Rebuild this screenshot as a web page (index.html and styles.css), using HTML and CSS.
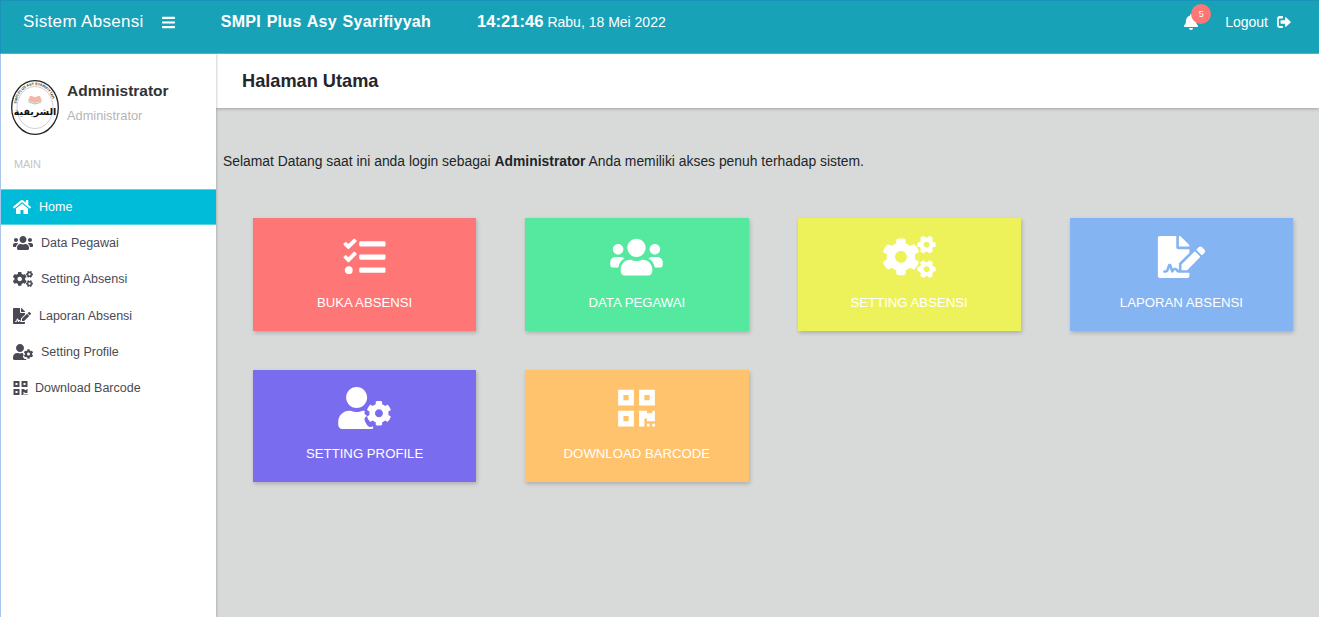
FILE: index.html
```html
<!DOCTYPE html>
<html lang="id">
<head>
  <meta charset="UTF-8">
  <title>Sistem Absensi</title>
  <link rel="stylesheet" href="styles.css">
</head>
<body>
  <svg class="icon-defs" xmlns="http://www.w3.org/2000/svg">
    <symbol id="i-bars" viewBox="0 0 448 512"><path d="M16 132h416c8.837 0 16-7.163 16-16V76c0-8.837-7.163-16-16-16H16C7.163 60 0 67.163 0 76v40c0 8.837 7.163 16 16 16zm0 160h416c8.837 0 16-7.163 16-16v-40c0-8.837-7.163-16-16-16H16c-8.837 0-16 7.163-16 16v40c0 8.837 7.163 16 16 16zm0 160h416c8.837 0 16-7.163 16-16v-40c0-8.837-7.163-16-16-16H16c-8.837 0-16 7.163-16 16v40c0 8.837 7.163 16 16 16z"/></symbol>
    <symbol id="i-bell" viewBox="0 0 448 512"><path d="M224 512c35.32 0 63.97-28.65 63.97-64H160.03c0 35.35 28.65 64 63.97 64zm215.39-149.71c-19.32-20.76-55.47-51.99-55.47-154.29 0-77.7-54.48-139.9-127.94-155.16V32c0-17.67-14.32-32-31.98-32s-31.98 14.33-31.98 32v20.84C118.56 68.1 64.08 130.3 64.08 208c0 102.3-36.15 133.53-55.47 154.29-6 6.45-8.66 14.16-8.61 21.71.11 16.4 12.98 32 32.1 32h383.8c19.12 0 32-15.6 32.1-32 .05-7.55-2.61-15.27-8.61-21.71z"/></symbol>
    <symbol id="i-logout" viewBox="0 0 512 448"><path d="M200 0H90C40 0 0 40 0 90v268c0 50 40 90 90 90h110c8 0 14-6 14-14v-44c0-8-6-14-14-14H90c-16 0-30-14-30-30V122c0-16 14-30 30-30h110c8 0 14-6 14-14V14c0-8-6-14-14-14z"/><path d="M505 210L330 50c-15-13-38-3-38 17v93H150c-13 0-24 11-24 24v80c0 13 11 24 24 24h142v93c0 20 23 30 38 17l175-160c9-8 9-20 0-28z"/></symbol>
    <symbol id="i-home" viewBox="0 0 576 512"><path d="M280.37 148.26L96 300.11V464a16 16 0 0 0 16 16l112.06-.29a16 16 0 0 0 15.92-16V368a16 16 0 0 1 16-16h64a16 16 0 0 1 16 16v95.64a16 16 0 0 0 16 16.05L464 480a16 16 0 0 0 16-16V300L295.67 148.26a12.19 12.19 0 0 0-15.3 0zM571.6 251.47L488 182.56V44.05a12 12 0 0 0-12-12h-56a12 12 0 0 0-12 12v72.61L318.47 43a48 48 0 0 0-61 0L4.34 251.47a12 12 0 0 0-1.6 16.9l25.5 31A12 12 0 0 0 45.15 301l235.22-193.74a12.19 12.19 0 0 1 15.3 0L530.9 301a12 12 0 0 0 16.9-1.6l25.5-31a12 12 0 0 0-1.7-16.93z"/></symbol>
    <symbol id="i-users" viewBox="0 0 640 512"><path d="M96 224c35.3 0 64-28.7 64-64s-28.7-64-64-64-64 28.7-64 64 28.7 64 64 64zm448 0c35.3 0 64-28.7 64-64s-28.7-64-64-64-64 28.7-64 64 28.7 64 64 64zm32 32h-64c-17.6 0-33.5 7.1-45.1 18.6 40.3 22.1 68.9 62 75.1 109.4h66c17.7 0 32-14.3 32-32v-32c0-35.3-28.7-64-64-64zm-256 0c61.9 0 112-50.1 112-112S381.9 32 320 32 208 82.1 208 144s50.1 112 112 112zm76.8 32h-8.3c-20.8 10-43.9 16-68.5 16s-47.6-6-68.5-16h-8.3C179.6 288 128 339.6 128 403.2V432c0 26.5 21.5 48 48 48h288c26.5 0 48-21.5 48-48v-28.8c0-63.6-51.6-115.2-115.2-115.2zm-223.7-13.4C161.5 263.1 145.6 256 128 256H64c-35.3 0-64 28.7-64 64v32c0 17.7 14.3 32 32 32h65.9c6.3-47.4 34.9-87.3 75.2-109.4z"/></symbol>
    <symbol id="i-tasks" viewBox="0 0 512 512"><path d="M139.61 35.5a12 12 0 0 0-17 0L58.93 98.81l-22.7-22.12a12 12 0 0 0-17 0L3.53 92.41a12 12 0 0 0 0 17l47.59 47.4a12.78 12.78 0 0 0 17.61 0l15.59-15.62L156.52 69a12.09 12.09 0 0 0 .09-17zm0 159.19a12 12 0 0 0-17 0l-63.68 63.72-22.7-22.1a12 12 0 0 0-17 0L3.53 252a12 12 0 0 0 0 17L51 316.5a12.77 12.77 0 0 0 17.6 0l15.7-15.69 72.2-72.22a12 12 0 0 0 .09-16.9zM64 368c-26.49 0-48.59 21.5-48.59 48S37.53 464 64 464a48 48 0 0 0 0-96zm432 16H208a16 16 0 0 0-16 16v32a16 16 0 0 0 16 16h288a16 16 0 0 0 16-16v-32a16 16 0 0 0-16-16zm0-320H208a16 16 0 0 0-16 16v32a16 16 0 0 0 16 16h288a16 16 0 0 0 16-16V80a16 16 0 0 0-16-16zm0 160H208a16 16 0 0 0-16 16v32a16 16 0 0 0 16 16h288a16 16 0 0 0 16-16v-32a16 16 0 0 0-16-16z"/></symbol>
    <symbol id="i-cogs" viewBox="0 0 640 512"><path d="M512.1 191l-8.2 14.3c-3 5.3-9.4 7.5-15.1 5.4-11.8-4.4-22.6-10.7-32.1-18.6-4.6-3.8-5.8-10.5-2.8-15.7l8.2-14.3c-6.9-8-12.3-17.3-15.9-27.4h-16.5c-6 0-11.2-4.3-12.2-10.3-2-12-2.1-24.6 0-37.1 1-6 6.2-10.4 12.2-10.4h16.5c3.6-10.1 9-19.4 15.9-27.4l-8.2-14.3c-3-5.2-1.9-11.9 2.8-15.7 9.5-7.9 20.4-14.2 32.1-18.6 5.7-2.1 12.1.1 15.1 5.4l8.2 14.3c10.5-1.9 21.2-1.9 31.7 0L552 6.3c3-5.3 9.4-7.5 15.1-5.4 11.8 4.4 22.6 10.7 32.1 18.6 4.6 3.8 5.8 10.5 2.8 15.7l-8.2 14.3c6.9 8 12.3 17.3 15.9 27.4h16.5c6 0 11.2 4.3 12.2 10.3 2 12 2.1 24.6 0 37.1-1 6-6.2 10.4-12.2 10.4h-16.5c-3.6 10.1-9 19.4-15.9 27.4l8.2 14.3c3 5.2 1.9 11.9-2.8 15.7-9.5 7.9-20.4 14.2-32.1 18.6-5.7 2.1-12.1-.1-15.1-5.4l-8.2-14.3c-10.4 1.9-21.2 1.9-31.7 0zm-10.5-58.8c38.5 29.6 82.4-14.3 52.8-52.8-38.5-29.7-82.4 14.3-52.8 52.8zM386.3 286.1l33.7 16.8c10.1 5.8 14.5 18.1 10.5 29.1-8.9 24.2-26.4 46.4-42.6 65.8-7.4 8.9-20.2 11.1-30.3 5.3l-29.1-16.8c-16 13.7-34.6 24.6-54.9 31.7v33.6c0 11.6-8.3 21.6-19.7 23.6-24.6 4.2-50.4 4.4-75.9 0-11.5-2-20-11.9-20-23.6V418c-20.3-7.2-38.9-18-54.9-31.7L74 403c-10 5.8-22.9 3.6-30.3-5.3-16.2-19.4-33.3-41.6-42.2-65.7-4-10.9.4-23.2 10.5-29.1l33.3-16.8c-3.9-20.9-3.9-42.4 0-63.4L12 205.8c-10.1-5.8-14.6-18.1-10.5-29 8.9-24.2 26-46.4 42.2-65.8 7.4-8.9 20.2-11.1 30.3-5.3l29.1 16.8c16-13.7 34.6-24.6 54.9-31.7V57.1c0-11.5 8.2-21.5 19.6-23.5 24.6-4.2 50.5-4.4 76-.1 11.5 2 20 11.9 20 23.6v33.6c20.3 7.2 38.9 18 54.9 31.7l29.1-16.8c10-5.8 22.9-3.6 30.3 5.3 16.2 19.4 33.2 41.6 42.1 65.8 4 10.9.1 23.2-10 29.1l-33.7 16.8c3.9 21 3.9 42.5 0 63.5zm-117.6 21.1c59.2-77-28.7-164.9-105.7-105.7-59.2 77 28.7 164.9 105.7 105.7zm243.4 182.7l-8.2 14.3c-3 5.3-9.4 7.5-15.1 5.4-11.8-4.4-22.6-10.7-32.1-18.6-4.6-3.8-5.8-10.5-2.8-15.7l8.2-14.3c-6.9-8-12.3-17.3-15.9-27.4h-16.5c-6 0-11.2-4.3-12.2-10.3-2-12-2.1-24.6 0-37.1 1-6 6.2-10.4 12.2-10.4h16.5c3.6-10.1 9-19.4 15.9-27.4l-8.2-14.3c-3-5.2-1.9-11.9 2.8-15.7 9.5-7.9 20.4-14.2 32.1-18.6 5.7-2.1 12.1.1 15.1 5.4l8.2 14.3c10.5-1.9 21.2-1.9 31.7 0l8.2-14.3c3-5.3 9.4-7.5 15.1-5.4 11.8 4.4 22.6 10.7 32.1 18.6 4.6 3.8 5.8 10.5 2.8 15.7l-8.2 14.3c6.9 8 12.3 17.3 15.9 27.4h16.5c6 0 11.2 4.3 12.2 10.3 2 12 2.1 24.6 0 37.1-1 6-6.2 10.4-12.2 10.4h-16.5c-3.6 10.1-9 19.4-15.9 27.4l8.2 14.3c3 5.2 1.9 11.9-2.8 15.7-9.5 7.9-20.4 14.2-32.1 18.6-5.7 2.1-12.1-.1-15.1-5.4l-8.2-14.3c-10.4 1.9-21.2 1.9-31.7 0zM501.6 431c38.5 29.6 82.4-14.3 52.8-52.8-38.5-29.6-82.4 14.3-52.8 52.8z"/></symbol>
    <symbol id="i-file" viewBox="0 0 576 512"><path d="M218.17 424.14c-2.95-5.92-8.09-6.52-10.17-6.52s-7.22.59-10.02 6.19l-7.67 15.34c-6.37 12.78-25.03 11.37-29.48-2.09L144 386.59l-10.61 31.88c-5.89 17.66-22.38 29.53-41 29.53H80c-8.84 0-16-7.16-16-16s7.16-16 16-16h12.39c4.83 0 9.11-3.08 10.64-7.66l18.19-54.64c3.3-9.81 12.44-16.41 22.78-16.41s19.48 6.59 22.77 16.41l13.88 41.64c19.75-16.19 54.06-9.7 66 14.16 1.89 3.78 5.49 5.95 9.36 6.26v-82.12l128-127.09V160H248c-13.2 0-24-10.8-24-24V0H24C10.7 0 0 10.7 0 24v464c0 13.3 10.7 24 24 24h336c13.3 0 24-10.7 24-24v-40l-128-.11c-16.12-.31-30.58-9.28-37.83-23.75zM384 121.9c0-6.3-2.5-12.4-7-16.9L279.1 7c-4.5-4.5-10.6-7-17-7H256v128h128v-6.1zm-96 225.06V416h68.99l161.68-162.78-67.88-67.88L288 346.96zm280.54-179.63l-31.87-31.87c-9.94-9.94-26.07-9.94-36.01 0l-27.25 27.25c-2.94 2.94-2.94 7.7 0 10.64l57.24 57.24c2.94 2.94 7.7 2.94 10.64 0l27.25-27.25c9.95-9.93 9.95-26.07 0-36.01z"/></symbol>
    <symbol id="i-usercog" viewBox="0 0 640 512"><path d="M610.5 341.3c2.6-14.1 2.6-28.5 0-42.6l25.8-14.9c3-1.7 4.3-5.2 3.3-8.5-6.7-21.5-18.2-41-33.2-57.1-2.3-2.5-6-3.1-9-1.4l-25.8 14.9c-10.9-9.3-23.4-16.5-36.9-21.3v-29.8c0-3.4-2.4-6.4-5.7-7.1-22.3-5-45-4.8-66.2 0-3.3.7-5.7 3.7-5.7 7.1v29.8c-13.5 4.8-26 12-36.9 21.3l-25.8-14.9c-2.9-1.7-6.7-1.1-9 1.4-15 16.1-26.5 35.6-33.2 57.1-1 3.3.4 6.8 3.3 8.5l25.8 14.9c-2.6 14.1-2.6 28.5 0 42.6l-25.8 14.9c-3 1.7-4.3 5.2-3.3 8.5 6.7 21.5 18.2 41 33.2 57.1 2.3 2.5 6 3.1 9 1.4l25.8-14.9c10.9 9.3 23.4 16.5 36.9 21.3v29.8c0 3.4 2.4 6.4 5.7 7.1 22.3 5 45 4.8 66.2 0 3.3-.7 5.7-3.7 5.7-7.1v-29.8c13.5-4.8 26-12 36.9-21.3l25.8 14.9c2.9 1.7 6.7 1.1 9-1.4 15-16.1 26.5-35.6 33.2-57.1 1-3.3-.4-6.8-3.3-8.5l-25.8-14.9zM496 368.5c-26.8 0-48.5-21.8-48.5-48.5s21.8-48.5 48.5-48.5 48.5 21.8 48.5 48.5-21.7 48.5-48.5 48.5zM224 256c70.7 0 128-57.3 128-128S294.7 0 224 0 96 57.3 96 128s57.3 128 128 128zm201.2 226.5c-2.3-1.2-4.6-2.6-6.8-3.9l-7.9 4.6c-6 3.4-12.8 5.3-19.6 5.3-10.9 0-21.4-4.6-28.9-12.6-18.3-19.8-32.3-43.9-40.2-69.6-5.5-17.7 1.9-36.4 17.9-45.7l7.9-4.6c-.1-2.6-.1-5.2 0-7.8l-7.9-4.6c-16-9.2-23.4-28-17.9-45.7.9-2.9 2.2-5.8 3.2-8.7-3.8-.3-7.5-1.2-11.4-1.2h-16.7c-22.2 10.2-46.9 16-72.9 16s-50.6-5.8-72.9-16h-16.7C60.2 288 0 348.2 0 422.4V464c0 26.5 21.5 48 48 48h352c10.1 0 19.5-3.2 27.2-8.5-1.2-3.8-2-7.7-2-11.8v-9.2z"/></symbol>
    <symbol id="i-qr" viewBox="0 0 448 512"><path d="M0 224h192V32H0v192zM64 96h64v64H64V96zm192-64v192h192V32H256zm128 128h-64V96h64v64zM0 480h192V288H0v192zm64-128h64v64H64v-64zm352-64h32v128h-96v-32h-32v96h-64V288h96v32h64v-32zm0 160h32v32h-32v-32zm-64 0h32v32h-32v-32z"/></symbol>
  </svg>

  <header class="topbar">
    <div class="brand">Sistem Absensi</div>
    <svg class="toggle"><use href="#i-bars"/></svg>
    <div class="school">SMPI Plus Asy Syarifiyyah</div>
    <div class="clock"><b>14:21:46</b> Rabu, 18 Mei 2022</div>
    <div class="top-right">
      <div class="bell">
        <svg class="bell-icon"><use href="#i-bell"/></svg>
        <span class="badge">5</span>
      </div>
      <a class="logout">Logout <svg class="logout-icon"><use href="#i-logout"/></svg></a>
    </div>
  </header>

  <div class="wrap">
    <aside class="sidebar">
      <div class="profile">
        <svg class="logo" viewBox="0 0 48 55">
          <defs><path id="logo-ring" d="M5 27.5a19 22.5 0 1 1 38 0"/></defs>
          <ellipse cx="24" cy="27.5" rx="23.3" ry="26.8" fill="#fff" stroke="#222" stroke-width="1.3"/>
          <ellipse cx="24" cy="27.5" rx="18" ry="21" fill="#fff" stroke="#888" stroke-width=".4"/>
          <text class="logo-ring-text"><textPath href="#logo-ring" startOffset="6%">SMPI PLUS ASY SYARIFIYYAH</textPath></text>
          <path d="M17 21l7 2 7-2-2-5c-2 0-4 .5-5 1.500-1-1-3-1.500-5-1.500z" fill="#f3b7a5"/>
          <path d="M17.500 22l6.500 2 6.500-2" fill="none" stroke="#7fb8b0" stroke-width=".8"/>
          <text class="logo-arabic" x="24" y="35" text-anchor="middle" direction="rtl">الشريفية</text>
        </svg>
        <div class="profile-text">
          <div class="profile-name">Administrator</div>
          <div class="profile-role">Administrator</div>
        </div>
      </div>
      <div class="side-label">MAIN</div>
      <nav class="side-nav">
        <a class="side-item active"><svg class="side-icon w-home"><use href="#i-home"/></svg>Home</a>
        <a class="side-item"><svg class="side-icon w-wide"><use href="#i-users"/></svg>Data Pegawai</a>
        <a class="side-item"><svg class="side-icon w-wide"><use href="#i-cogs"/></svg>Setting Absensi</a>
        <a class="side-item"><svg class="side-icon w-home"><use href="#i-file"/></svg>Laporan Absensi</a>
        <a class="side-item"><svg class="side-icon w-wide"><use href="#i-usercog"/></svg>Setting Profile</a>
        <a class="side-item"><svg class="side-icon w-qr"><use href="#i-qr"/></svg>Download Barcode</a>
      </nav>
    </aside>

    <main class="main">
      <div class="page-head"><h1>Halaman Utama</h1></div>
      <p class="welcome">Selamat Datang saat ini anda login sebagai <b>Administrator</b> Anda memiliki akses penuh terhadap sistem.</p>
      <section class="cards">
        <a class="card red"><svg class="card-icon"><use href="#i-tasks"/></svg><span>BUKA ABSENSI</span></a>
        <a class="card green"><svg class="card-icon"><use href="#i-users"/></svg><span>DATA PEGAWAI</span></a>
        <a class="card yellow"><svg class="card-icon"><use href="#i-cogs"/></svg><span>SETTING ABSENSI</span></a>
        <a class="card blue"><svg class="card-icon"><use href="#i-file"/></svg><span>LAPORAN ABSENSI</span></a>
        <a class="card purple"><svg class="card-icon"><use href="#i-usercog"/></svg><span>SETTING PROFILE</span></a>
        <a class="card orange"><svg class="card-icon"><use href="#i-qr"/></svg><span>DOWNLOAD BARCODE</span></a>
      </section>
    </main>
  </div>
</body>
</html>
```

FILE: styles.css
```css
* {
  box-sizing: border-box;
}
html, body {
  height: 100%;
}
body {
  margin: 0;
  display: flex;
  flex-direction: column;
  overflow: hidden;
  font-family: "Liberation Sans", Arial, sans-serif;
  color: #212529;
  background: #d8dada;
}
svg {
  fill: currentColor;
}
.icon-defs {
  display: none;
}

/* top bar */
.topbar {
  height: 54px;
  flex: none;
  display: flex;
  align-items: center;
  padding: 0 28px 10px 24px;
  color: #fff;
  background: #18a2b8;
  border-top: 1px solid #1b93b8;
  border-left: 1px solid #1b93b8;
  border-bottom: 1px solid #4fb6c8;
  position: relative;
  z-index: 3;
}
.brand {
  font-size: 17px;
  letter-spacing: .32px;
  margin-left: -2px;
}
.toggle {
  width: 13px;
  height: 15px;
  margin-left: 18px;
}
.school {
  font-size: 16px;
  font-weight: bold;
  letter-spacing: .28px;
  word-spacing: 1px;
  margin-left: 46px;
}
.clock {
  font-size: 14px;
  margin-left: 46px;
}
.clock b {
  font-size: 16.600px;
}
.top-right {
  margin-left: auto;
  display: flex;
  align-items: center;
}
.bell {
  position: relative;
  width: 14px;
  height: 16px;
}
.bell-icon {
  display: block;
  width: 14px;
  height: 16px;
}
.badge {
  position: absolute;
  left: 7px;
  top: -10px;
  width: 20px;
  height: 20px;
  border-radius: 50%;
  background: #ff7676;
  font-size: 9px;
  line-height: 20px;
  text-align: center;
}
.logout {
  display: flex;
  align-items: center;
  gap: 9px;
  font-size: 14px;
  margin-left: 27px;
}
.logout-icon {
  width: 14px;
  height: 12px;
}

/* layout */
.wrap {
  flex: 1;
  display: flex;
  min-height: 0;
}
.sidebar {
  width: 216px;
  flex: none;
  background: #fff;
  border-left: 1px solid #a9c4ee;
  box-shadow: 1px 0 2px rgba(0, 0, 0, .18);
  position: relative;
  z-index: 2;
}
.profile {
  display: flex;
  align-items: center;
  gap: 8px;
  padding: 26px 0 0 10px;
}
.logo {
  width: 48px;
  height: 55px;
  flex: none;
}
.logo-ring-text {
  font-size: 3.600px;
  font-weight: bold;
  fill: #333;
}
.logo-arabic {
  font-family: "DejaVu Sans", sans-serif;
  font-size: 9.500px;
  font-weight: bold;
  fill: #111;
}
.profile-text {
  margin-bottom: 11px;
}
.profile-name {
  font-size: 15.500px;
  font-weight: bold;
  color: #333;
  margin-bottom: 8px;
}
.profile-role {
  font-size: 12.800px;
  color: #b5b5b5;
}
.side-label {
  font-size: 11px;
  letter-spacing: -.2px;
  color: #c4c4c4;
  padding: 23px 0 0 13px;
  height: 53.500px;
}
.side-item {
  height: 36.300px;
  display: flex;
  align-items: center;
  padding-left: 12px;
  font-size: 12.500px;
  color: #4a4a55;
}
.side-item.active {
  color: #fff;
  background: #00bcd9;
  border-top: 1px solid #5bd4e6;
  border-bottom: 1px solid #5bd4e6;
}
.side-icon {
  height: 16px;
  flex: none;
}
.w-home {
  width: 18px;
  margin-right: 8px;
}
.w-wide {
  width: 20px;
  margin-right: 8px;
}
.w-qr {
  width: 15px;
  margin-right: 7px;
}

/* main */
.main {
  flex: 1;
  min-width: 0;
}
.page-head {
  height: 54px;
  display: flex;
  align-items: center;
  padding-left: 26px;
  background: #fff;
  box-shadow: 0 1px 3px rgba(0, 0, 0, .25);
}
.page-head h1 {
  margin: 0;
  font-size: 18.200px;
  font-weight: bold;
  color: #24262b;
}
.welcome {
  margin: 45px 0 0 7px;
  font-size: 13.880px;
  line-height: 17px;
}
.cards {
  display: grid;
  grid-template-columns: repeat(4, 1fr);
  gap: 39px 49px;
  padding: 48px 26px 0 37px;
}
.card {
  height: 112.500px;
  display: flex;
  flex-direction: column;
  align-items: center;
  padding-top: 17.500px;
  color: #fff;
  font-size: 13.200px;
  box-shadow: 1px 2px 4px rgba(0, 0, 0, .2);
}
.card-icon {
  width: 53px;
  height: 42px;
  margin-bottom: 16px;
}
.card span {
  line-height: 17px;
}
.red { background: #ff7676; }
.green { background: #55e99f; }
.yellow { background: #eef25a; }
.blue { background: #85b4f2; }
.purple { background: #7a6cee; }
.orange { background: #ffc36d; }
```
